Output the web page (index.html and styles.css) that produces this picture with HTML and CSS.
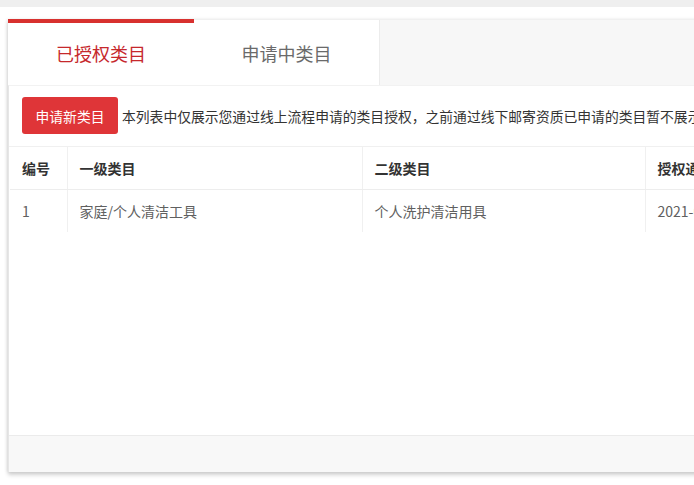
FILE: index.html
```html
<!DOCTYPE html>
<html lang="zh-CN">
<head>
<meta charset="utf-8">
<title>类目管理</title>
<link rel="stylesheet" href="styles.css">
</head>
<body>
<div class="topbar"></div>
<div class="page">
  <div class="tabs">
    <div class="tab tab-active">已授权类目</div>
    <div class="tab">申请中类目</div>
    <div class="tab-rest"></div>
  </div>
  <div class="panel">
    <div class="toolbar">
      <button class="btn-apply">申请新类目</button>
      <span class="notice">本列表中仅展示您通过线上流程申请的类目授权，之前通过线下邮寄资质已申请的类目暂不展示，如需查看请联系客服。</span>
    </div>
    <table class="grid">
      <colgroup>
        <col class="c-no">
        <col class="c-first">
        <col class="c-second">
        <col class="c-time">
        <col class="c-op">
      </colgroup>
      <thead>
        <tr><th>编号</th><th>一级类目</th><th>二级类目</th><th>授权通过时间</th><th>操作</th></tr>
      </thead>
      <tbody>
        <tr><td>1</td><td>家庭/个人清洁工具</td><td>个人洗护清洁用具</td><td>2021-06-18 10:23:45</td><td>查看</td></tr>
      </tbody>
    </table>
    <div class="spacer"></div>
    <div class="footer"></div>
  </div>
</div>
</body>
</html>
```

FILE: styles.css
```css
html, body {
  margin: 0;
  padding: 0;
  background: #ffffff;
  overflow: hidden;
  width: 694px;
  height: 485px;
}
body {
  font-family: "Noto Sans CJK SC", "Noto Sans", sans-serif;
  color: #333;
}
.topbar {
  height: 7px;
  background: #efefef;
}
.page {
  margin: 12px 0 0 8px;
  width: 1000px;
  box-shadow: 0 3px 4px rgba(0,0,0,0.18), -1px 0 3px rgba(0,0,0,0.08);
}
.tabs {
  display: flex;
  height: 65px;
  background: #f7f7f7;
  border-top: 1px solid #f0f0f0;
}
.tab {
  width: 186px;
  background: #fff;
  border-right: 1px solid #ececec;
  display: flex;
  align-items: center;
  justify-content: center;
  font-size: 18px;
  color: #6a6a6a;
  box-sizing: border-box;
}
.tab-active {
  width: 186px;
  border-top: 4px solid #d8312f;
  margin-top: -1px;
  color: #c6282c;
  padding-bottom: 2px;
  border-right: none;
}
.tab-rest {
  flex: 1;
}
.panel {
  background: #fff;
  border-left: 1px solid #e6e6e6;
  border-top: 1px solid #f2f2f2;
  display: flex;
  flex-direction: column;
}
.toolbar {
  display: flex;
  align-items: center;
  padding: 11px 0 12px 13px;
  white-space: nowrap;
  border-bottom: 1px solid #f0f0f0;
}
.btn-apply {
  background: #df3538;
  color: #fff;
  border: none;
  border-radius: 3px;
  height: 37px;
  width: 96px;
  font-family: inherit;
  font-size: 13.8px;
  padding: 0;
  flex: none;
}
.notice {
  margin-left: 4px;
  font-size: 13.8px;
  color: #333;
}
.grid {
  border-collapse: collapse;
  table-layout: fixed;
  width: 900px;
  margin-left: 1px;
  font-size: 14px;
}
.c-no { width: 57px; }
.c-first { width: 295px; }
.c-second { width: 283px; }
.c-time { width: 200px; }
.c-op { width: 65px; }
.grid th, .grid td {
  text-align: left;
  padding: 0 12px;
  border-left: 1px solid #f0f0f0;
  white-space: nowrap;
  overflow: hidden;
}
.grid th:first-child, .grid td:first-child {
  border-left: none;
}
.grid th {
  height: 42px;
  font-weight: 600;
  color: #333;
  border-bottom: 1px solid #ededed;
}
.grid td {
  height: 42px;
  color: #606060;
}
.spacer {
  height: 203px;
}
.footer {
  height: 36px;
  background: #f8f8f8;
  border-top: 1px solid #ebebeb;
}
```
